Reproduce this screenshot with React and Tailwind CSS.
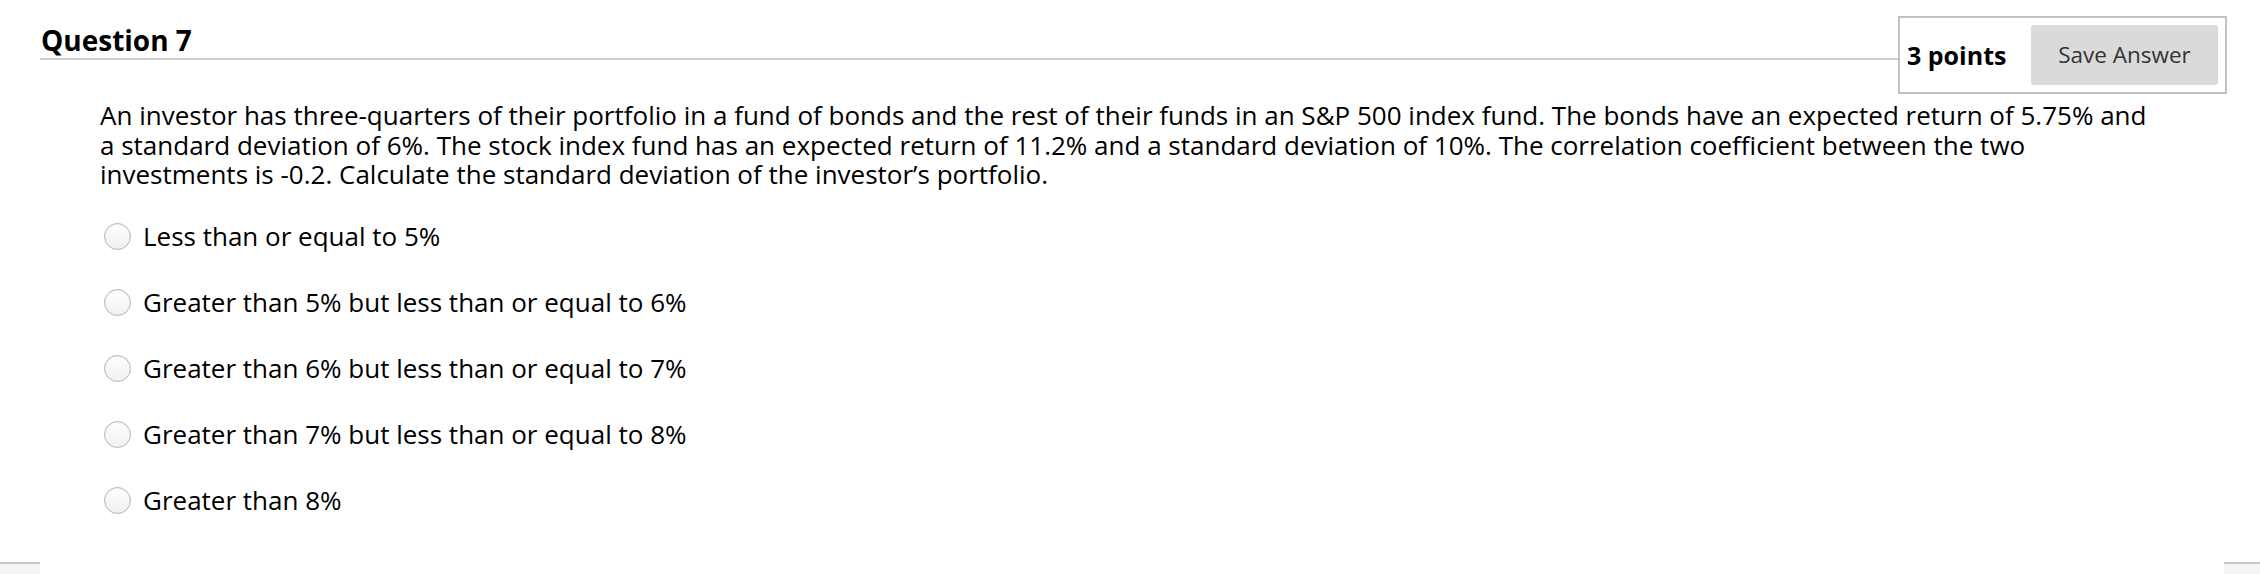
import React from "react";

const options = [
  "Less than or equal to 5%",
  "Greater than 5% but less than or equal to 6%",
  "Greater than 6% but less than or equal to 7%",
  "Greater than 7% but less than or equal to 8%",
  "Greater than 8%",
];

function Radio() {
  return (
    <span className="w-[27px] h-[27px] shrink-0 rounded-full border border-[#b4b4b4] bg-gradient-to-b from-white to-[#f0f0f0] shadow-[inset_0_1px_2px_rgba(0,0,0,0.07)]" />
  );
}

export default function App() {
  return (
    <div className="w-[2260px] h-[574px] bg-white flex flex-col font-['Open_Sans',sans-serif] text-black">
      {/* header */}
      <div className="flex items-start pl-[40px] pr-[33px] pt-[16px]">
        <div className="flex-1 h-[44px] flex items-end border-b-2 border-[#cccccc] pb-[4px]">
          <h2 className="pl-[1px] text-[28px] font-bold leading-none">Question 7</h2>
        </div>
        <div className="w-[329px] h-[78px] border-2 border-[#c2c2c2] flex items-center justify-between pl-[7px] pr-[7px]">
          <span className="text-[25px] font-bold leading-none">3 points</span>
          <button
            type="button"
            className="w-[187px] h-[60px] rounded-[3px] bg-[#dadada] text-[22.5px] text-[#333333]"
          >
            Save Answer
          </button>
        </div>
      </div>

      {/* question body */}
      <div className="pl-[100px] mt-[7px] text-[26px] leading-[29.5px] whitespace-nowrap">
        <p>
          An investor has three-quarters of their portfolio in a fund of bonds and the rest of their funds in an S&amp;P 500 index fund. The bonds have an expected return of 5.75% and
          <br />
          a standard deviation of 6%. The stock index fund has an expected return of 11.2% and a standard deviation of 10%. The correlation coefficient between the two
          <br />
          investments is -0.2. Calculate the standard deviation of the investor’s portfolio.
        </p>
      </div>

      <div className="pl-[104px] mt-[14px] flex flex-col">
        {options.map((o) => (
          <label key={o} className="h-[66px] flex items-center gap-[12px] text-[26px]">
            <Radio />
            <span>{o}</span>
          </label>
        ))}
      </div>

      {/* next question edge */}
      <div className="mt-auto h-[12px] flex justify-between">
        <div className="w-[40px] border-t-2 border-[#c8c8c8] bg-[#f5f5f5]" />
        <div className="w-[36px] border-t-2 border-[#c8c8c8] bg-[#f5f5f5]" />
      </div>
    </div>
  );
}
